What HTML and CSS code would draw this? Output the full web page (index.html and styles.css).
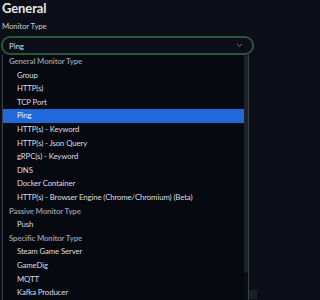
FILE: index.html
```html
<!DOCTYPE html>
<html>
<head>
<meta charset="utf-8">
<link rel="stylesheet" href="styles.css">
</head>
<body>
<div class="page">
  <h2 class="title">General</h2>
  <div class="field">
    <div class="label">Monitor Type</div>
    <div class="select-wrap">
      <div class="select">
        <span class="value">Ping</span>
        <svg class="chev" width="7" height="5" viewBox="0 0 7 5"><polyline points="1,1 3.5,3.5 6,1" fill="none" stroke="#6b7078" stroke-width="1"/></svg>
      </div>
      <div class="menu">
        <div class="options">
          <div class="grp">General Monitor Type</div>
          <div class="opt">Group</div>
          <div class="opt">HTTP(s)</div>
          <div class="opt">TCP Port</div>
          <div class="opt sel">Ping</div>
          <div class="opt">HTTP(s) - Keyword</div>
          <div class="opt">HTTP(s) - Json Query</div>
          <div class="opt">gRPC(s) - Keyword</div>
          <div class="opt">DNS</div>
          <div class="opt">Docker Container</div>
          <div class="opt">HTTP(s) - Browser Engine (Chrome/Chromium) (Beta)</div>
          <div class="grp">Passive Monitor Type</div>
          <div class="opt">Push</div>
          <div class="grp">Specific Monitor Type</div>
          <div class="opt">Steam Game Server</div>
          <div class="opt">GameDig</div>
          <div class="opt">MQTT</div>
          <div class="opt">Kafka Producer</div>
        </div>
        <div class="scrollbar"><div class="thumb"></div></div>
      </div>
    </div>
  </div>
  <div class="next-field"></div>
</div>
</body>
</html>
```

FILE: styles.css
```css
html, body {
  margin: 0;
  padding: 0;
  background: #0c0f17;
  overflow: hidden;
}
.page {
  width: 257px;
  height: 300px;
  overflow: hidden;
  font-family: Lato, "Noto Sans", sans-serif;
  color: #dcdde0;
}
.title {
  margin: 0;
  padding: 1px 0 0 2px;
  font-size: 13px;
  line-height: 15px;
  font-weight: 700;
  letter-spacing: -0.1px;
  color: #e6e7ea;
}
.field {
  padding-top: 4px;
}
.label {
  padding-left: 2px;
  font-size: 7.8px;
  line-height: 13px;
  letter-spacing: -0.1px;
  color: #c8cacd;
}
.select-wrap {
  position: relative;
  margin-top: 3px;
}
.select {
  margin-left: 1px;
  height: 15px;
  border: 2px solid #295638;
  border-radius: 9px;
  display: flex;
  align-items: center;
  justify-content: space-between;
  padding: 0 9px 0 6px;
  box-sizing: content-box;
  width: 234px;
}
.value {
  font-size: 8px;
  letter-spacing: -0.1px;
  color: #dcdde0;
}
.chev {
  display: block;
}
.menu {
  position: absolute;
  left: 2px;
  top: 19px;
  width: 245px;
  height: 245px;
  overflow: hidden;
  background: #060910;
  border-left: 1px solid #3c4049;
  border-right: 1px solid #3c4049;
  display: flex;
  z-index: 2;
}
.options {
  flex: 1;
  font-size: 7.8px;
  letter-spacing: -0.12px;
}
.grp, .opt {
  height: 13.6px;
  line-height: 13.6px;
  white-space: nowrap;
  overflow: hidden;
}
.grp {
  padding-left: 6px;
  color: #9096a0;
  font-weight: 700;
}
.opt {
  padding-left: 14px;
  color: #dcdde0;
}
.opt.sel {
  background: #2168d8;
  color: #f2f4f8;
}
.scrollbar {
  width: 4px;
  background: #0b0e15;
}
.thumb {
  height: 218px;
  background: #1d212a;
  border-radius: 0 0 2px 2px;
}
.next-field {
  margin: 235px 0 0 249px;
  height: 9px;
  background: #1b1f28;
}
```
